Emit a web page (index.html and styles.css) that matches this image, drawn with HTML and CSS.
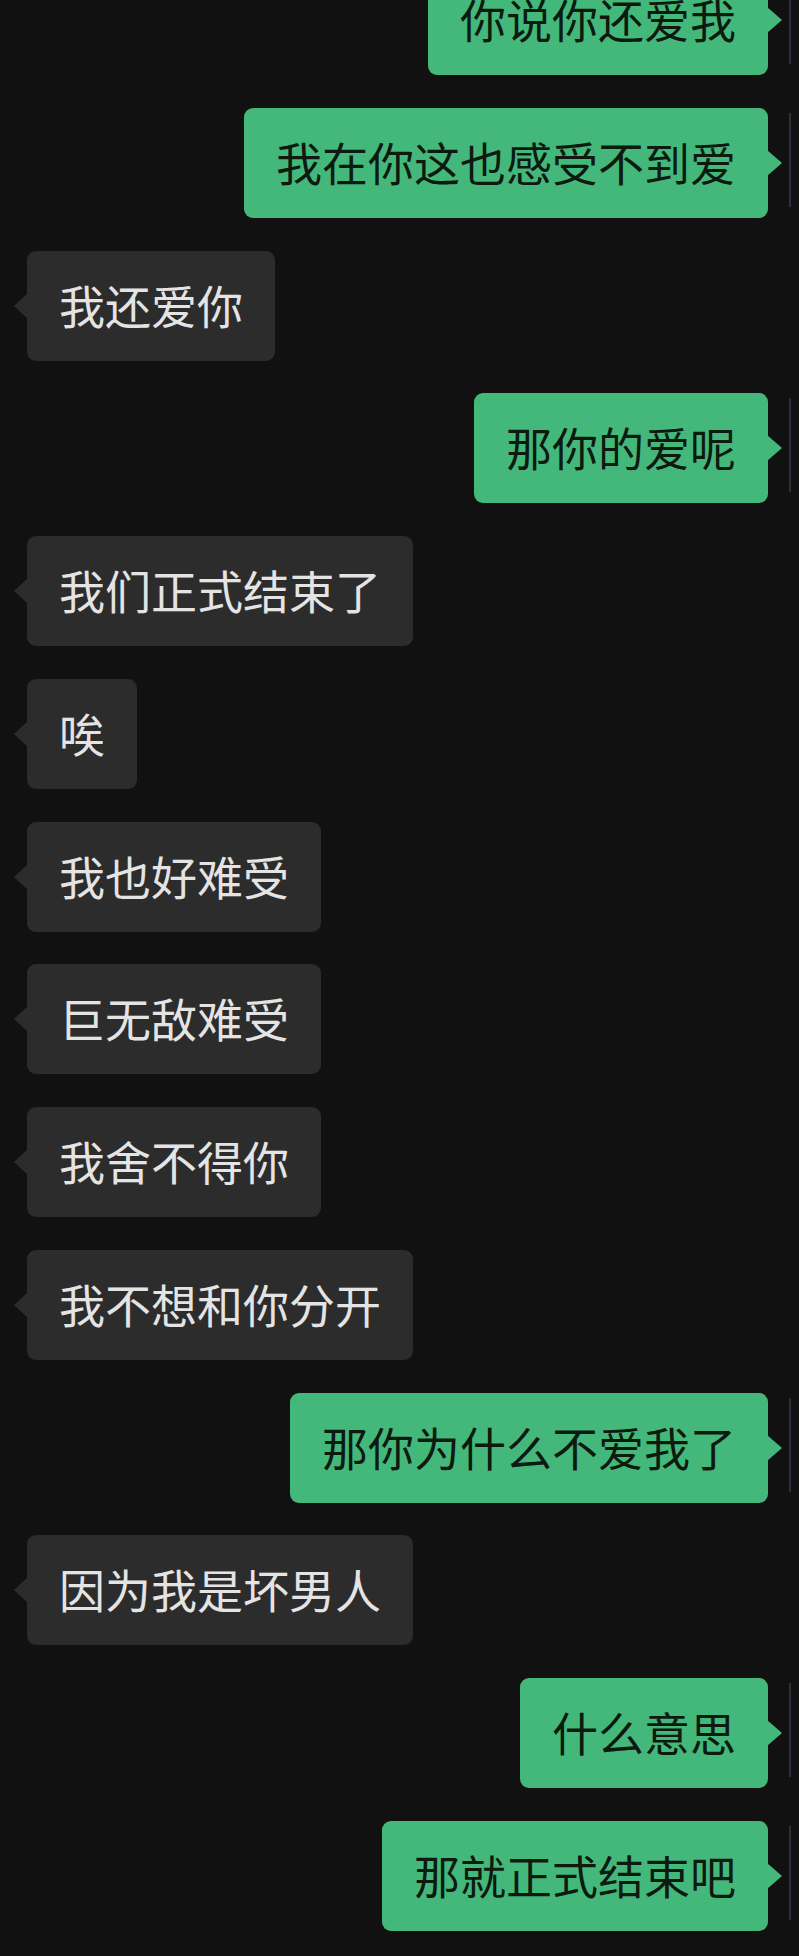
FILE: index.html
```html
<!DOCTYPE html>
<html lang="zh-CN">
<head>
  <meta charset="UTF-8">
  <title>聊天记录</title>
  <link rel="stylesheet" href="styles.css">
</head>
<body>
  <div class="chat">
    <div class="row me"><div class="bubble">你说你还爱我</div><span class="avatar"></span></div>
    <div class="row me"><div class="bubble">我在你这也感受不到爱</div><span class="avatar"></span></div>
    <div class="row other"><div class="bubble">我还爱你</div></div>
    <div class="row me"><div class="bubble">那你的爱呢</div><span class="avatar"></span></div>
    <div class="row other"><div class="bubble">我们正式结束了</div></div>
    <div class="row other"><div class="bubble">唉</div></div>
    <div class="row other"><div class="bubble">我也好难受</div></div>
    <div class="row other"><div class="bubble">巨无敌难受</div></div>
    <div class="row other"><div class="bubble">我舍不得你</div></div>
    <div class="row other"><div class="bubble">我不想和你分开</div></div>
    <div class="row me"><div class="bubble">那你为什么不爱我了</div><span class="avatar"></span></div>
    <div class="row other"><div class="bubble">因为我是坏男人</div></div>
    <div class="row me"><div class="bubble">什么意思</div><span class="avatar"></span></div>
    <div class="row me"><div class="bubble">那就正式结束吧</div><span class="avatar"></span></div>
  </div>
</body>
</html>
```

FILE: styles.css
```css
body {
  margin: 0;
  padding: 0;
  background: #111112;
  font-family: "Noto Sans CJK SC", "Noto Sans", sans-serif;
  overflow: hidden;
}

.chat {
  display: flex;
  flex-direction: column;
  gap: 32.75px;
  margin-top: -35px;
}

.row {
  display: flex;
  align-items: center;
}

.row.other {
  padding-left: 27px;
}

.row.me {
  justify-content: flex-end;
}

.bubble {
  position: relative;
  font-size: 46px;
  line-height: 56px;
  padding: 25px 32px 29px;
  border-radius: 9px;
  white-space: nowrap;
}

.other .bubble {
  background: #2c2c2c;
  color: #e4e4e4;
}

.me .bubble {
  background: #44b87a;
  color: #0c1a10;
}

/* little tails */
.bubble::before {
  content: "";
  position: absolute;
  top: 50%;
  margin-top: -13px;
  border-top: 13px solid transparent;
  border-bottom: 13px solid transparent;
}

.other .bubble::before {
  left: -13px;
  border-right: 14px solid #2c2c2c;
}

.me .bubble::before {
  right: -14px;
  border-left: 15px solid #44b87a;
}

/* avatar cut off by the right edge */
.avatar {
  width: 8px;
  height: 94px;
  margin-left: 21px;
  border-left: 2px solid #2a303c;
  align-self: flex-start;
  margin-top: 5px;
}
```
